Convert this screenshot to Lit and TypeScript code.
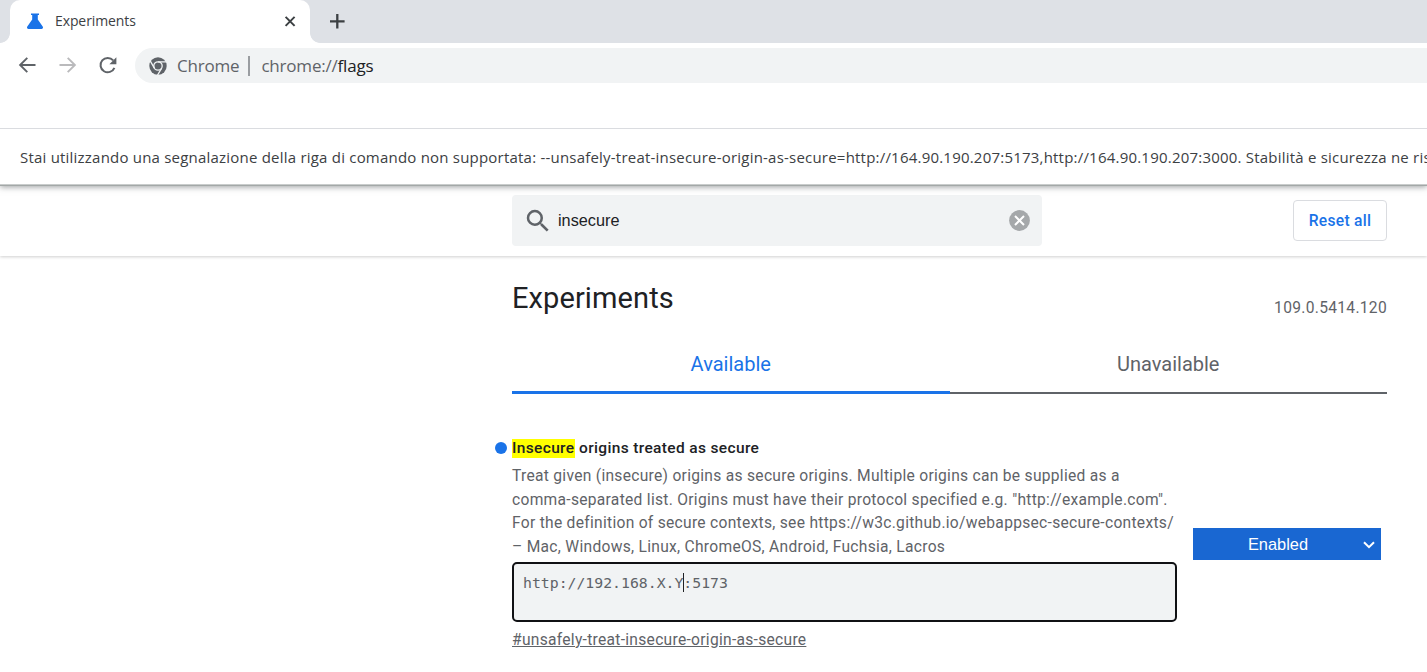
import { LitElement, html, css } from "lit";
import { customElement } from "lit/decorators.js";

@customElement("browser-chrome")
class BrowserChrome extends LitElement {
  static styles = css`
    :host { display: block; font-family: "Open Sans", sans-serif; background: #fff; }
    .strip { display: flex; height: 43px; background: #dee1e6; align-items: flex-end; }
    .corner { width: 10px; height: 10px; flex: none; }
    .left { background: radial-gradient(circle at 0 0, #dee1e6 9.5px, #fff 10.2px); }
    .right { background: radial-gradient(circle at 10px 0, #dee1e6 9.5px, #fff 10.2px); }
    .tab { box-sizing: border-box; width: 300px; height: 43px; background: #fff; border-radius: 10px 10px 0 0;
      display: flex; align-items: center; padding: 0 14px 1px 17px; }
    .flask { width: 16px; height: 16px; margin-right: 12px; }
    .title { flex: 1; font-size: 14px; letter-spacing: -0.1px; line-height: 20px; color: #3c4043; }
    .close { width: 12px; height: 12px; }
    .plus { width: 16px; height: 16px; margin: 0 0 14px 9px; }
    .bar { display: flex; height: 35px; padding: 5px 0 0 17px; align-items: center; }
    .nav { width: 20px; height: 20px; margin: 0 20px 2px 0; }
    .reload { margin-right: 18px; }
    .omni { box-sizing: border-box; flex: 1; height: 35px; border-radius: 18px 0 0 18px; background: #f1f3f4; display: flex; align-items: center;
      padding-left: 13.5px; font-size: 17px; line-height: 23px; color: #5f6368; white-space: pre; }
    .logo { width: 18px; height: 18px; margin-right: 10.5px; }
    .sep { width: 1.5px; height: 20px; background: #9a9da1; margin: 0 11.5px 0 9px; }
    .name, .url { letter-spacing: -0.2px; padding-bottom: 1px; }
    .path { color: #202124; }
  `;
  render() {
    return html`
      <div class="strip">
        <div class="corner left"></div>
        <div class="tab">
          <svg class="flask" viewBox="0 0 16 16"><path fill="#1a73e8" d="M4 0.4h8v1.6h-1.2v4.4l4.9 7.2c.7 1.1.2 2.3-1.1 2.3H1.4c-1.3 0-1.8-1.2-1.1-2.3l4.9-7.2V2H4z"/></svg>
          <span class="title">Experiments</span>
          <svg class="close" viewBox="0 0 12 12" stroke="#3c4043" stroke-width="2"><path d="M1.6 1.9l9 9M10.6 1.9l-9 9"/></svg>
        </div>
        <div class="corner right"></div>
        <svg class="plus" viewBox="0 0 16 16" stroke="#3c4043" stroke-width="2.3"><path d="M8.3 1v14.6M1 8.3h14.6"/></svg>
      </div>
      <div class="bar">
        <svg class="nav" viewBox="0 0 20 20" fill="none" stroke="#5f6368" stroke-width="1.9"><path d="M18.5 10H3.5M10.3 2.8L3.1 10l7.2 7.2"/></svg>
        <svg class="nav" viewBox="0 0 20 20" fill="none" stroke="#bababc" stroke-width="1.9"><path d="M2.5 10h15M10.7 2.8l7.2 7.2-7.2 7.2"/></svg>
        <svg class="nav reload" viewBox="0 0 20 20" fill="none" stroke="#5f6368" stroke-width="2"><path d="M17.4 12.8A7.2 7.2 0 1 1 16.2 5.4"/><path fill="#5f6368" stroke="none" d="M19.4 2.2v7h-7z"/></svg>
        <div class="omni">
          <svg class="logo" viewBox="0 0 18 18">
            <circle cx="9" cy="9" r="8.7" fill="#5f6368"/>
            <g stroke="#f1f3f4" stroke-width="1.3" fill="none">
              <circle cx="9" cy="9" r="4.2"/><path d="M9 4.8h8.6M12.64 11.1L8.34 18.5M5.36 11.1L1.06 3.66"/>
            </g>
          </svg>
          <span class="name">Chrome</span><span class="sep"></span><span class="url">chrome://<span class="path">flags</span></span>
        </div>
      </div>
    `;
  }
}

@customElement("info-bar")
class InfoBar extends LitElement {
  static styles = css`
    :host { display: block; position: relative; z-index: 2; box-sizing: border-box; height: 57px; border-top: 1px solid #dadce0;
      border-bottom: 1px solid #c9cccc; background: #fff; box-shadow: 0 1px 0 #a3a8a7, 0 2px 6px rgba(60,64,67,.5);
      clip-path: inset(0 0 -12px 0); }
    .text { font-family: "Open Sans", sans-serif; font-size: 15px; line-height: 57px; height: 55px; padding-left: 20px; color: #3c4043;
      white-space: nowrap; letter-spacing: .211px; }
  `;
  render() {
    return html`<div class="text">Stai utilizzando una segnalazione della riga di comando non supportata: --unsafely-treat-insecure-origin-as-secure=http://164.90.190.207:5173,http://164.90.190.207:3000. Stabilità e sicurezza ne ris</div>`;
  }
}

@customElement("flags-page")
class FlagsPage extends LitElement {
  static styles = css`
    :host { display: block; font-family: Roboto, sans-serif; color: #5f6368; }
    .head { box-sizing: border-box; height: 71px; padding: 10px 40px 0 512px; display: flex; justify-content: space-between;
      align-items: flex-start; background: #fff; box-shadow: 0 1px 3px rgba(0,0,0,.19); }
    .search { box-sizing: border-box; width: 530px; height: 51px; border-radius: 4px; background: #f1f3f4; display: flex;
      align-items: center; padding: 0 12px 0 11px; }
    .glass { width: 30px; height: 30px; margin-right: 5px; }
    .query { flex: 1; font: 16.25px/20px "Liberation Sans", sans-serif; color: #202124; padding-bottom: 2px; }
    .clear { width: 21px; height: 21px; }
    .reset { box-sizing: border-box; width: 94px; height: 41px; margin-top: 5px; border: 1px solid #dadce0; border-radius: 4px;
      text-align: center; font-size: 15.6px; font-weight: 500; line-height: 41px; color: #1a73e8; letter-spacing: .3px; }
    .main { padding: 0 40px 0 512px; }
    .top { display: flex; justify-content: space-between; height: 78px; }
    .h1 { font-size: 29px; line-height: 34px; margin-top: 25px; color: #202124; letter-spacing: .1px; }
    .ver { font-size: 15.6px; line-height: 20px; margin-top: 42px; letter-spacing: .3px; }
    .tabs { display: flex; height: 60px; text-align: center; font-size: 20px; line-height: 60px; }
    .tab { box-sizing: border-box; flex: 1; height: 60px; border-bottom: 2px solid #5f6368; }
    .on { color: #1a73e8; border-bottom: 3px solid #1a73e8; }
    .row { display: flex; padding-top: 42px; }
    .info { width: 665px; }
    .name { margin-left: -17px; display: flex; align-items: center; height: 24px; font-size: 15.5px; font-weight: 500; color: #202124; white-space: pre; letter-spacing: .35px; }
    .dot { width: 12px; height: 12px; margin-right: 5px; border-radius: 50%; background: #1a73e8; }
    .name mark { background: #ff0; color: #202124; line-height: 19px; display: inline-block; padding-right: .4px; }
    .desc { margin-top: 5px; font-size: 15.6px; line-height: 23.7px; letter-spacing: .285px; white-space: nowrap; }
    .box { box-sizing: border-box; width: 665px; height: 60px; border: 2px solid #101114; border-radius: 5px; background: #f1f3f4;
      padding: 9px 9px; margin-top: 2px; display: flex; align-items: flex-start; font: 14.8px/19px "DejaVu Sans Mono", monospace; }
    .caret { width: 1px; height: 19px; margin-right: -1px; background: #202124; }
    .link { display: block; margin-top: 6px; font-size: 15.6px; line-height: 24px; letter-spacing: .285px; text-decoration: underline; white-space: nowrap; }
    .select { box-sizing: border-box; width: 188px; height: 32px; margin: 92px 0 0 16px; background: #1967d2; color: #fff; display: flex;
      align-items: center; padding: 0 6px 0 0; font: 16.4px/30px "Liberation Sans", sans-serif; }
    .value { flex: 1; text-align: center; padding-bottom: 1px; }
    .chev { width: 12px; height: 8px; margin-top: 1px; }
  `;
  render() {
    return html`
      <div class="head">
        <div class="search">
          <svg class="glass" viewBox="0 0 24 24" fill="#5f6368"><path d="M15.5 14h-.79l-.28-.27A6.47 6.47 0 0 0 16 9.5 6.5 6.5 0 1 0 9.5 16c1.61 0 3.09-.59 4.23-1.57l.27.28v.79l5 4.99L20.49 19zm-6 0a4.5 4.5 0 1 1 0-9 4.5 4.5 0 0 1 0 9z"/></svg>
          <span class="query">insecure</span>
          <svg class="clear" viewBox="0 0 21 21"><circle cx="10.5" cy="10.5" r="10.4" fill="#a5a8aa"/><path stroke="#fff" stroke-width="2" d="M6 6l9 9M15 6l-9 9"/></svg>
        </div>
        <div class="reset">Reset all</div>
      </div>
      <div class="main">
        <div class="top"><div class="h1">Experiments</div><div class="ver">109.0.5414.120</div></div>
        <div class="tabs"><div class="tab on">Available</div><div class="tab">Unavailable</div></div>
        <div class="row">
          <div class="info">
            <div class="name"><span class="dot"></span><mark>Insecure</mark> origins treated as secure</div>
            <div class="desc">
              <div>Treat given (insecure) origins as secure origins. Multiple origins can be supplied as a</div>
              <div>comma-separated list. Origins must have their protocol specified e.g. "http://example.com".</div>
              <div>For the definition of secure contexts, see https://w3c.github.io/webappsec-secure-contexts/</div>
              <div>– Mac, Windows, Linux, ChromeOS, Android, Fuchsia, Lacros</div>
            </div>
            <div class="box"><span>http://192.168.X.Y</span><span class="caret"></span><span>:5173</span></div>
            <span class="link">#unsafely-treat-insecure-origin-as-secure</span>
          </div>
          <div class="select"><span class="value">Enabled</span><svg class="chev" viewBox="0 0 12 8" fill="none" stroke="#fff" stroke-width="2"><path d="M1 1.2l5 5 5-5"/></svg></div>
        </div>
      </div>
    `;
  }
}

@customElement("app-root")
class AppRoot extends LitElement {
  static styles = css`
    :host { display: block; width: 1427px; height: 672px; overflow: hidden; background: #fff; }
    .chrome { height: 128px; }
  `;
  render() {
    return html`<div class="chrome"><browser-chrome></browser-chrome></div><info-bar></info-bar><flags-page></flags-page>`;
  }
}
